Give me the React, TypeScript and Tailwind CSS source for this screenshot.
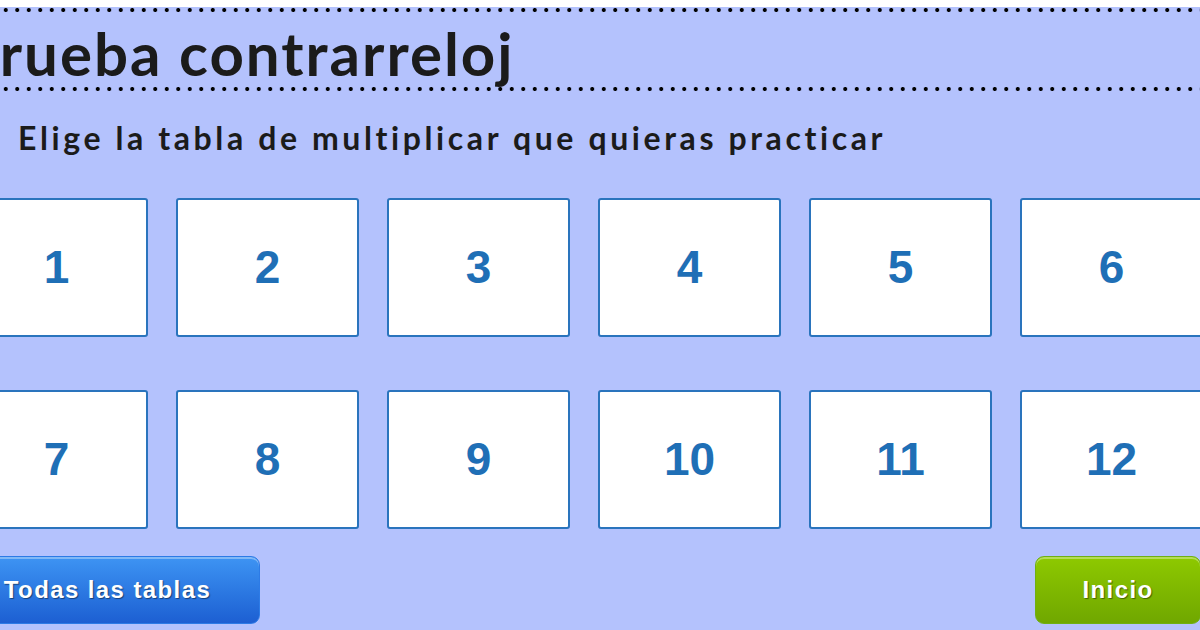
import React from "react";

const tables = [1, 2, 3, 4, 5, 6, 7, 8, 9, 10, 11, 12];

function DottedRule() {
  return (
    <div className="h-[6px] w-full bg-[radial-gradient(circle,#000_0,#000_1.7px,transparent_2.3px)] bg-[length:11.5px_6px] bg-repeat-x" />
  );
}

export default function App() {
  return (
    <div className="h-[630px] w-[1200px] overflow-hidden bg-white">
      <div className="mt-[7px] h-[623px] bg-[#b4c2fd]">
        <DottedRule />
        <div className="-ml-[45px] w-[1246px]">
          <h1 className="h-[73px] whitespace-nowrap pl-[6px] pt-[10px] font-['Lato',sans-serif] text-[60px] font-bold leading-[60px] tracking-[2px] text-[#1b1b1b]">
            Prueba contrarreloj
          </h1>
        </div>
        <DottedRule />
        <div className="-ml-[45px] w-[1246px]">
          <p className="whitespace-nowrap pl-[63px] pt-[27px] font-['Lato',sans-serif] text-[32px] font-bold leading-[38px] tracking-[3.6px] text-[#1b1b1b]">
            Elige la tabla de multiplicar que quieras practicar
          </p>
          <div className="mt-[41px] grid grid-cols-[repeat(6,183px)] gap-x-[28px] gap-y-[53px] pl-[10px]">
            {tables.map((n) => (
              <button
                key={n}
                className="flex h-[139px] items-center justify-center rounded-[3px] border-2 border-[#2a74bd] bg-white font-['Liberation_Sans',Arial,sans-serif] text-[46px] font-bold text-[#1f6fb6]"
              >
                {n}
              </button>
            ))}
          </div>
          <div className="mt-[27px] flex justify-between">
            <button className="flex h-[68px] w-[305px] items-center justify-center rounded-[9px] border border-[#2d7be6] bg-gradient-to-b from-[#3e94f3] to-[#1d5fd2] font-['Liberation_Sans',Arial,sans-serif] text-[24px] font-bold tracking-[1.4px] text-white shadow-[inset_0_2px_0_rgba(255,255,255,0.35)] [text-shadow:1px_1px_1px_rgba(0,0,0,0.45)]">
              Todas las tablas
            </button>
            <button className="flex h-[68px] w-[166px] items-center justify-center rounded-[9px] border border-[#6fb012] bg-gradient-to-b from-[#8ec900] to-[#70a700] font-['Liberation_Sans',Arial,sans-serif] text-[24px] font-bold tracking-[1.4px] text-white shadow-[inset_0_2px_0_rgba(255,255,255,0.35)] [text-shadow:1px_1px_1px_rgba(0,0,0,0.45)]">
              Inicio
            </button>
          </div>
        </div>
      </div>
    </div>
  );
}
